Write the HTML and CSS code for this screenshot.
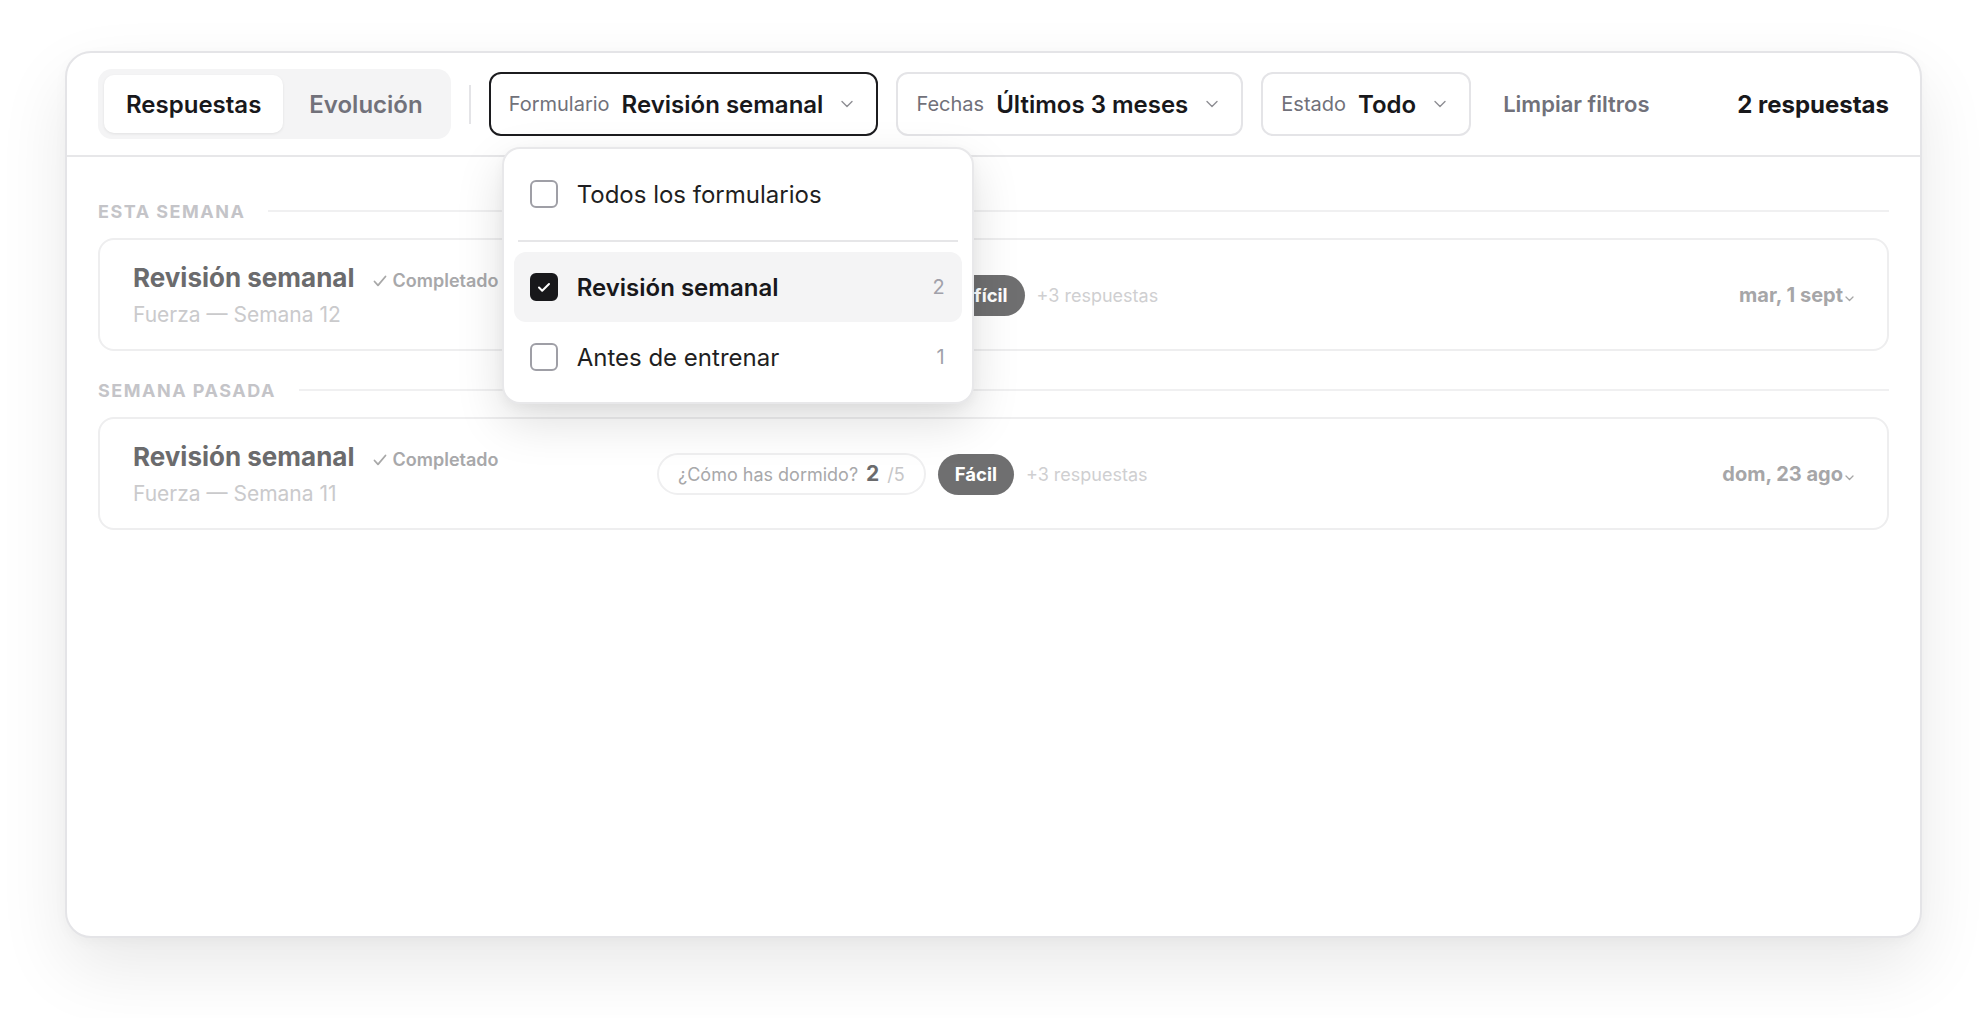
FILE: index.html
```html
<!DOCTYPE html>
<html lang="es">
<head>
    <meta charset="UTF-8">
    <meta name="viewport" content="width=device-width, initial-scale=1.0">
    <title>Respuestas</title>
    <link rel="stylesheet" href="styles.css">
</head>
<body>
    <div class="panel">
        <!-- Toolbar: tabs + filters -->
        <div class="toolbar">
            <div class="tabs">
                <button class="tab is-active">Respuestas</button>
                <button class="tab">Evolución</button>
            </div>
            <span class="toolbar-sep"></span>

            <div class="filter-wrap">
                <button class="filter is-open">
                    <span class="filter-label">Formulario</span>
                    <span class="filter-value">Revisión semanal</span>
                    <svg class="chevron" width="12" height="8" viewBox="0 0 12 8"><path d="M1 1.5l5 5 5-5" fill="none" stroke="#8e8e93" stroke-width="1.4" stroke-linecap="round" stroke-linejoin="round"/></svg>
                </button>

                <div class="menu">
                    <div class="menu-option">
                        <span class="checkbox"></span>
                        <span class="menu-text">Todos los formularios</span>
                    </div>
                    <div class="menu-divider"></div>
                    <div class="menu-option is-selected">
                        <span class="checkbox is-checked">
                            <svg width="14" height="11" viewBox="0 0 14 11"><path d="M2 5.5l3.2 3.2L12 2" fill="none" stroke="#fff" stroke-width="2" stroke-linecap="round" stroke-linejoin="round"/></svg>
                        </span>
                        <span class="menu-text">Revisión semanal</span>
                        <span class="menu-count">2</span>
                    </div>
                    <div class="menu-option">
                        <span class="checkbox"></span>
                        <span class="menu-text">Antes de entrenar</span>
                        <span class="menu-count">1</span>
                    </div>
                </div>
            </div>

            <button class="filter">
                <span class="filter-label">Fechas</span>
                <span class="filter-value">Últimos 3 meses</span>
                <svg class="chevron" width="12" height="8" viewBox="0 0 12 8"><path d="M1 1.5l5 5 5-5" fill="none" stroke="#8e8e93" stroke-width="1.4" stroke-linecap="round" stroke-linejoin="round"/></svg>
            </button>
            <button class="filter">
                <span class="filter-label">Estado</span>
                <span class="filter-value">Todo</span>
                <svg class="chevron" width="12" height="8" viewBox="0 0 12 8"><path d="M1 1.5l5 5 5-5" fill="none" stroke="#8e8e93" stroke-width="1.4" stroke-linecap="round" stroke-linejoin="round"/></svg>
            </button>
            <button class="clear">Limpiar filtros</button>
            <span class="count">2 respuestas</span>
        </div>

        <!-- Response list grouped by week -->
        <div class="list">
            <section class="group">
                <div class="group-head">Esta semana</div>
                <article class="entry">
                    <div class="entry-main">
                        <div class="entry-title">
                            <span class="entry-name">Revisión semanal</span>
                            <span class="status">
                                <svg width="14" height="12" viewBox="0 0 14 12"><path d="M1.5 6.5l3.5 3.8L12.5 1.5" fill="none" stroke="#a8a8a8" stroke-width="1.8" stroke-linecap="round" stroke-linejoin="round"/></svg>
                                Completado
                            </span>
                        </div>
                        <div class="entry-sub">Fuerza — Semana 12</div>
                    </div>
                    <div class="entry-answers">
                        <span class="chip">¿Cómo has dormido? <b class="chip-value">4</b><span class="chip-scale">/5</span></span>
                        <span class="badge">Difícil</span>
                        <span class="more">+3 respuestas</span>
                    </div>
                    <div class="entry-date">mar, 1 sept<svg width="9" height="6" viewBox="0 0 9 6"><path d="M1 1l3.5 3.5L8 1" fill="none" stroke="#a6a6a6" stroke-width="1.3" stroke-linecap="round" stroke-linejoin="round"/></svg></div>
                </article>
            </section>

            <section class="group">
                <div class="group-head">Semana pasada</div>
                <article class="entry">
                    <div class="entry-main">
                        <div class="entry-title">
                            <span class="entry-name">Revisión semanal</span>
                            <span class="status">
                                <svg width="14" height="12" viewBox="0 0 14 12"><path d="M1.5 6.5l3.5 3.8L12.5 1.5" fill="none" stroke="#a8a8a8" stroke-width="1.8" stroke-linecap="round" stroke-linejoin="round"/></svg>
                                Completado
                            </span>
                        </div>
                        <div class="entry-sub">Fuerza — Semana 11</div>
                    </div>
                    <div class="entry-answers">
                        <span class="chip">¿Cómo has dormido? <b class="chip-value">2</b><span class="chip-scale">/5</span></span>
                        <span class="badge">Fácil</span>
                        <span class="more">+3 respuestas</span>
                    </div>
                    <div class="entry-date">dom, 23 ago<svg width="9" height="6" viewBox="0 0 9 6"><path d="M1 1l3.5 3.5L8 1" fill="none" stroke="#a6a6a6" stroke-width="1.3" stroke-linecap="round" stroke-linejoin="round"/></svg></div>
                </article>
            </section>
        </div>
    </div>
</body>
</html>
```

FILE: styles.css
```css
* {
    box-sizing: border-box;
}
body {
    margin: 0;
    padding: 51px 66px 80px 65px;
    background-color: #ffffff;
    font-family: 'Inter', 'Noto Sans', sans-serif;
    color: #18181b;
}
button {
    font: inherit;
    color: inherit;
    background: none;
    border: none;
    padding: 0;
    cursor: pointer;
}
.panel {
    position: relative;
    height: 887px;
    background-color: #ffffff;
    border: 2px solid #e4e4e7;
    border-radius: 26px;
    box-shadow: 0 30px 70px rgba(0, 0, 0, 0.09), 0 4px 14px rgba(0, 0, 0, 0.03);
}

/* Toolbar */
.toolbar {
    display: flex;
    align-items: center;
    gap: 18px;
    height: 104px;
    padding: 0 31px;
    border-bottom: 2px solid #e7e7e9;
}
.tabs {
    display: flex;
    gap: 4px;
    padding: 6px;
    background-color: #f4f4f5;
    border-radius: 14px;
}
.tab {
    height: 58px;
    padding: 0 22px;
    border-radius: 10px;
    font-size: 24px;
    font-weight: 600;
    color: #71717a;
}
.tab.is-active {
    background-color: #ffffff;
    color: #18181b;
    box-shadow: 0 1px 3px rgba(0, 0, 0, 0.08);
}
.toolbar-sep {
    width: 2px;
    height: 39px;
    background-color: #e4e4e7;
}
.filter-wrap {
    position: relative;
}
.filter {
    display: flex;
    align-items: center;
    height: 64px;
    padding: 0 23px 0 18px;
    border: 2px solid #e4e4e7;
    border-radius: 12px;
    background-color: #ffffff;
}
.filter.is-open {
    border-color: #1c1c1f;
}
.filter-label {
    font-size: 20px;
    color: #71717a;
    margin-right: 12px;
}
.filter-value {
    font-size: 24px;
    font-weight: 600;
    color: #18181b;
}
.filter .chevron {
    margin-left: 18px;
}
.clear {
    height: 64px;
    padding: 0 14px;
    font-size: 22px;
    font-weight: 600;
    color: #71717a;
}
.count {
    margin-left: auto;
    font-size: 24px;
    font-weight: 700;
}

/* Dropdown menu */
.menu {
    position: absolute;
    top: calc(100% + 11px);
    left: 13px;
    width: 472px;
    padding: 10px;
    background-color: #ffffff;
    border: 2px solid #e8e8ea;
    border-radius: 18px;
    box-shadow: 0 18px 48px rgba(0, 0, 0, 0.13), 0 4px 12px rgba(0, 0, 0, 0.04);
    z-index: 10;
}
.menu-option {
    display: flex;
    align-items: center;
    height: 70px;
    padding: 0 17px 0 16px;
    border-radius: 12px;
    font-size: 24px;
    color: #1f1f22;
}
.menu-option.is-selected {
    background-color: #f4f4f5;
}
.menu-option.is-selected .menu-text {
    font-weight: 600;
    color: #18181b;
}
.menu-count {
    margin-left: auto;
    font-size: 20px;
    color: #a1a1aa;
}
.checkbox {
    display: flex;
    align-items: center;
    justify-content: center;
    width: 28px;
    height: 28px;
    margin-right: 19px;
    border: 2px solid #9f9fa6;
    border-radius: 6px;
    background-color: #ffffff;
}
.checkbox.is-checked {
    background-color: #18181b;
    border-color: #18181b;
}
.menu-divider {
    height: 2px;
    margin: 11px 4px 10px;
    background-color: #e6e6e8;
}

/* List */
.list {
    padding: 39px 31px 0;
}
.group + .group {
    margin-top: 24px;
}
.group-head {
    display: flex;
    align-items: center;
    height: 30px;
    margin-bottom: 12px;
    font-size: 18px;
    font-weight: 700;
    letter-spacing: 1.5px;
    text-transform: uppercase;
    color: #c4c4c8;
}
.group-head::after {
    content: "";
    flex: 1;
    height: 2px;
    margin-left: 23px;
    background-color: #f0f0f1;
}
.entry {
    display: grid;
    grid-template-columns: 500px 1fr auto;
    align-items: center;
    column-gap: 24px;
    padding: 22px 33px 21px 33px;
    border: 2px solid #eeeeef;
    border-radius: 16px;
}
.entry-title {
    display: flex;
    align-items: baseline;
    gap: 18px;
    line-height: 32px;
}
.entry-name {
    font-size: 26px;
    font-weight: 700;
    color: #6b6b6d;
}
.status {
    display: inline-flex;
    align-items: center;
    gap: 6px;
    font-size: 18px;
    font-weight: 600;
    color: #a8a8aa;
}
.entry-sub {
    margin-top: 5px;
    font-size: 21px;
    line-height: 26px;
    color: #cacacc;
}
.entry-answers {
    display: flex;
    align-items: center;
    gap: 12px;
}
.chip {
    display: inline-flex;
    align-items: baseline;
    height: 42px;
    padding: 0 19px;
    line-height: 38px;
    border: 2px solid #efeff0;
    border-radius: 999px;
    font-size: 18px;
    color: #a8a8aa;
}
.chip-value {
    margin-left: 8px;
    font-size: 21px;
    font-weight: 700;
    color: #6b6b6d;
}
.chip-scale {
    margin-left: 8px;
    color: #c6c6c8;
}
.badge {
    display: inline-flex;
    align-items: center;
    height: 41px;
    padding: 0 17px;
    border-radius: 999px;
    background-color: #6f6f70;
    font-size: 18.5px;
    font-weight: 700;
    color: #ffffff;
}
.more {
    font-size: 18px;
    color: #cfcfd1;
}
.entry-date {
    font-size: 20px;
    font-weight: 700;
    color: #a6a6a8;
}
.entry-date svg {
    margin-left: 2px;
    vertical-align: baseline;
}
```
